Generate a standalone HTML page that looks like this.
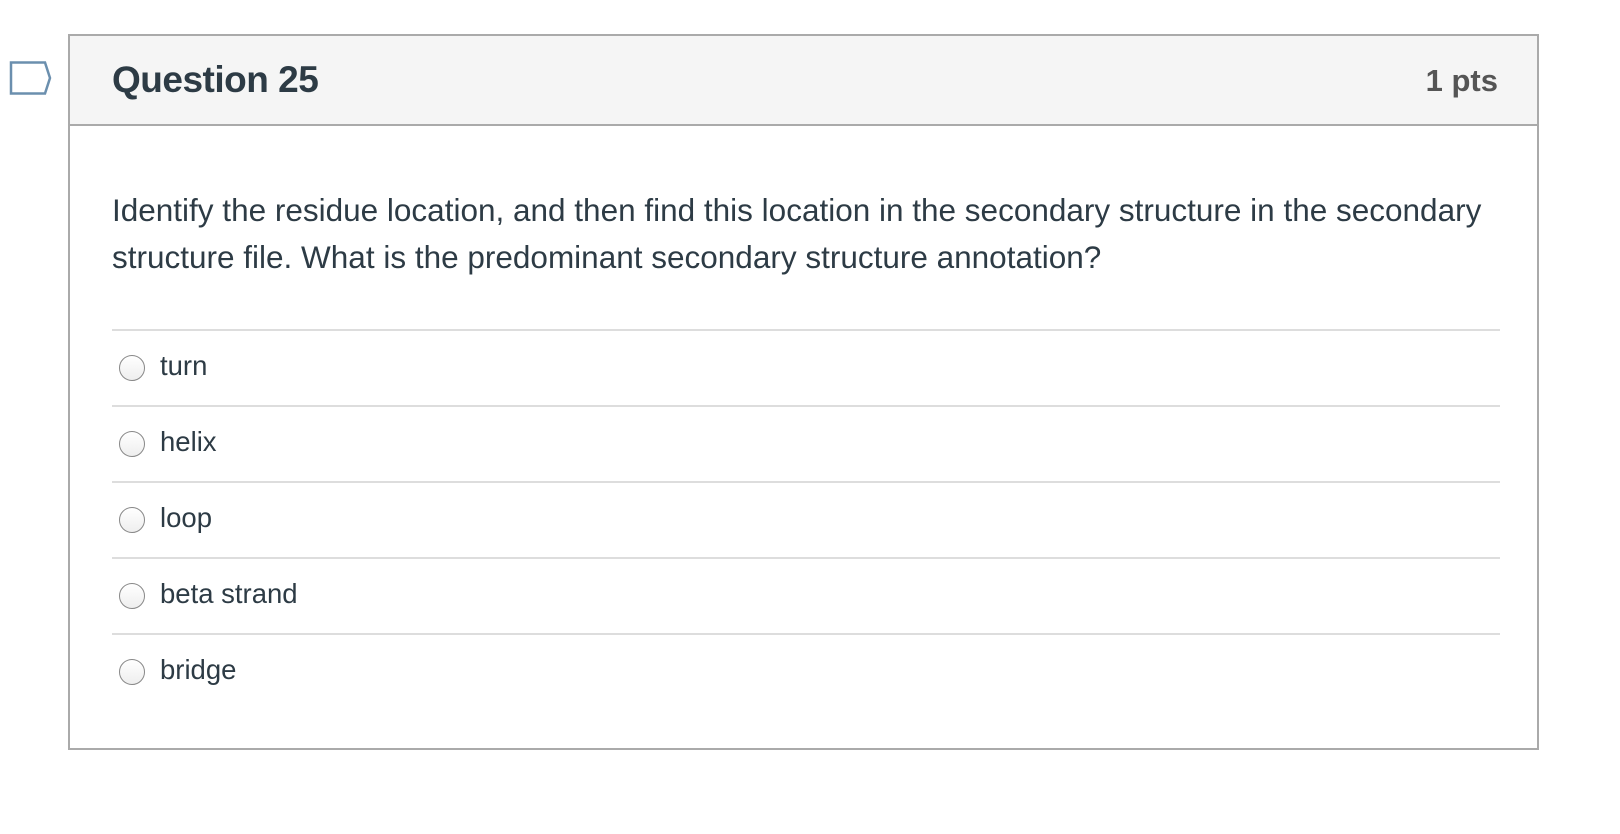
<!DOCTYPE html>
<html><head><style>
body{margin:0;width:1620px;height:834px;background:#fff;font-family:"Liberation Sans",sans-serif;position:relative;overflow:hidden}
.box{position:absolute;left:68px;top:34px;width:1471px;height:716px;border:2px solid #aaa;box-sizing:border-box}
.hdr{position:absolute;left:0;top:0;right:0;height:88px;background:#f5f5f5;border-bottom:2px solid #aaa}
.title{position:absolute;left:42px;top:23px;font-size:37px;font-weight:bold;color:#2d3b45;letter-spacing:-0.5px}
.pts{position:absolute;right:39px;top:27px;font-size:31px;font-weight:bold;color:#555}
.q{position:absolute;left:42px;top:151px;width:1420px;font-size:31.5px;line-height:47px;color:#2d3b45;letter-spacing:0px;white-space:nowrap}
.line{position:absolute;left:42px;width:1388px;height:2px;background:#ddd}
.opt{position:absolute;left:90px;font-size:27.5px;color:#2d3b45}
.rad{position:absolute;left:49px;width:26px;height:26px;border:1px solid #888;border-radius:50%;background:linear-gradient(#fff,#eee);box-sizing:border-box}
</style></head><body>
<svg style="position:absolute;left:9px;top:61px" width="43" height="34"><path d="M2 1.5H36L41 17L36 32.5H2Z" fill="none" stroke="#6b8fae" stroke-width="2.5"/></svg>
<div class="box">
<div class="hdr"><div class="title">Question 25</div><div class="pts">1 pts</div></div>
<div class="q">Identify the residue location, and then find this location in the secondary structure in the secondary<br>structure file. What is the predominant secondary structure annotation?</div>
<div class="line" style="top:293px"></div>
<div class="rad" style="top:319px"></div><div class="opt" style="top:314px">turn</div>
<div class="line" style="top:369px"></div>
<div class="rad" style="top:395px"></div><div class="opt" style="top:390px">helix</div>
<div class="line" style="top:445px"></div>
<div class="rad" style="top:471px"></div><div class="opt" style="top:466px">loop</div>
<div class="line" style="top:521px"></div>
<div class="rad" style="top:547px"></div><div class="opt" style="top:542px">beta strand</div>
<div class="line" style="top:597px"></div>
<div class="rad" style="top:623px"></div><div class="opt" style="top:618px">bridge</div>
</div>
</body></html>
